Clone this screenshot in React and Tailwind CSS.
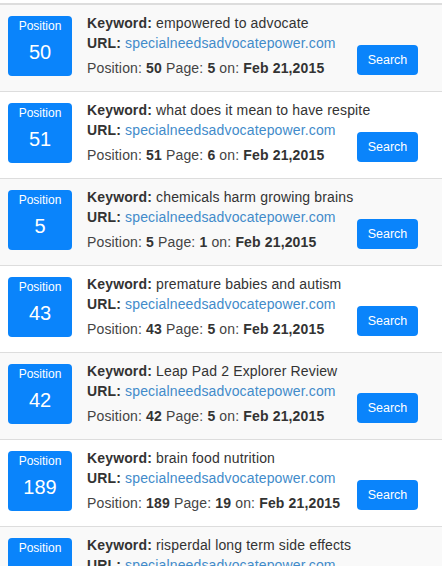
import React from 'react';

const rows = [
    { position: 50, keyword: 'empowered to advocate', page: 5 },
    { position: 51, keyword: 'what does it mean to have respite', page: 6 },
    { position: 5, keyword: 'chemicals harm growing brains', page: 1 },
    { position: 43, keyword: 'premature babies and autism', page: 5 },
    { position: 42, keyword: 'Leap Pad 2 Explorer Review', page: 5 },
    { position: 189, keyword: 'brain food nutrition', page: 19 },
    { position: 56, keyword: 'risperdal long term side effects', page: 6 }
];

const RankRow = ({ item, striped }) => {
    return (
        <div className={`grid grid-cols-[87px_270px_1fr] border-t border-[#dddddd] first:border-t-2 ${striped ? 'bg-[#f9f9f9]' : 'bg-white'}`}>
            <div className="pl-2 pt-[11px]">
                <div className="w-16 h-[60px] rounded bg-[#0a84fb] text-white flex flex-col items-center">
                    <span className="text-[12px] leading-4 mt-[2px]">Position</span>
                    <span className="text-[20px] leading-6 mt-[6px]">{item.position}</span>
                </div>
            </div>
            <div className="pt-2 pb-[13px] text-[14px] text-[#333333] tracking-[0.15px] whitespace-nowrap">
                <div className="leading-5">
                    <b>Keyword:</b> {item.keyword}
                </div>
                <div className="leading-5">
                    <b>URL:</b> <a className="text-[#428bca]">specialneedsadvocatepower.com</a>
                </div>
                <div className="leading-5 mt-[5px] text-[#444444]">
                    Position: <b className="text-[#333333]">{item.position}</b> Page: <b className="text-[#333333]">{item.page}</b> on: <b className="text-[#333333]">Feb 21,2015</b>
                </div>
            </div>
            <div className="pt-10">
                <button className="w-[61px] h-[30px] rounded bg-[#0a84fb] text-white text-[12.5px]">
                    Search
                </button>
            </div>
        </div>
    );
};

const App = () => {
    return (
        <div className="bg-white h-screen overflow-hidden pt-[3px]" style={{ fontFamily: '"Liberation Sans", Arial, sans-serif' }}>
            <div className="w-[442px] border-b border-[#dddddd]">
                {rows.map((item, i) => (
                    <RankRow key={i} item={item} striped={i % 2 === 0} />
                ))}
            </div>
        </div>
    );
};

export default App;
